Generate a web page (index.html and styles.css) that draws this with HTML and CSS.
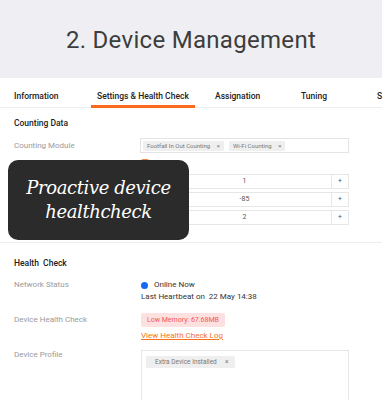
FILE: index.html
```html
<html>
<head>
<meta charset="utf-8" />
<title>Device Management</title>
<link rel="stylesheet" href="styles.css">
</head>
<body>
<header class="banner">
	<h1>2. Device Management</h1>
</header>

<nav class="tabs">
	<span class="tab tab-info">Information</span>
	<span class="tab tab-settings active">Settings &amp; Health Check</span>
	<span class="tab tab-assign">Assignation</span>
	<span class="tab tab-tuning">Tuning</span>
	<span class="tab">S</span>
</nav>

<section class="panel counting">
	<h2 class="section-title">Counting Data</h2>
	<div class="row">
		<span class="label">Counting Module</span>
		<div class="tagbox">
			<span class="tag">Footfall In Out Counting <i>×</i></span>
			<span class="tag">Wi-Fi Counting <i>×</i></span>
		</div>
	</div>
	<!-- these rows sit under the callout, labels hidden -->
	<div class="row row-check">
		<span class="label"></span>
		<span class="check"></span>
	</div>
	<div class="row row-num">
		<span class="label"></span>
		<div class="stepper"><span class="btn"></span><span class="val">1</span><span class="btn">+</span></div>
	</div>
	<div class="row row-num">
		<span class="label"></span>
		<div class="stepper"><span class="btn"></span><span class="val">-85</span><span class="btn">+</span></div>
	</div>
	<div class="row row-num">
		<span class="label"></span>
		<div class="stepper"><span class="btn"></span><span class="val">2</span><span class="btn">+</span></div>
	</div>
</section>

<section class="panel health">
	<h2 class="section-title">Health&nbsp; Check</h2>
	<div class="row row-top">
		<span class="label">Network Status</span>
		<div class="value">
			<div class="status"><span class="dot"></span>Online Now</div>
			<div>Last Heartbeat on&nbsp; 22 May 14:38</div>
		</div>
	</div>
	<div class="row row-top row-hc">
		<span class="label">Device Health Check</span>
		<div class="value">
			<span class="badge">Low Memory: 67.68MB</span>
			<a class="log-link" href="#">View Health Check Log</a>
		</div>
	</div>
	<div class="row row-top row-profile">
		<span class="label">Device Profile</span>
		<div class="areabox">
			<span class="tag">Extra Device Installed&nbsp; <i>×</i></span>
		</div>
	</div>
</section>

<div class="callout">Proactive device<br>healthcheck</div>
</body>
</html>
```

FILE: styles.css
```css
body{
	margin:0;
	width:382px;
	height:400px;
	overflow:hidden;
	background:#fff;
	font-family:Roboto, "Liberation Sans", sans-serif;
	position:relative;
}
.banner{
	height:78px;
	background:#efeff3;
	display:flex;
	align-items:center;
	justify-content:center;
}
.banner h1{
	margin:0;
	font-size:24px;
	font-weight:400;
	letter-spacing:0.3px;
	color:#3d3d3d;
	padding-top:1px;
}
.tabs{
	display:flex;
	height:30px;
	padding-left:8px;
	box-shadow:inset 0 -1px #eeeeee;
	white-space:nowrap;
	overflow:hidden;
}
.tab{
	box-sizing:border-box;
	height:30px;
	padding:10px 6px 0;
	line-height:16px;
	font-size:8.5px;
	font-weight:500;
	color:#222;
	flex-shrink:0;
}
.tab-info{ width:83px; }
.tab-settings{ width:104px; margin-right:14px; }
.tab-assign{ width:86px; }
.tab-tuning{ width:76px; }
.tab.active{
	border-bottom:3px solid #fb6a1b;
}
.panel{
	padding-left:14px;
}
.counting{
	padding-top:9px;
	height:125px;
	border-bottom:1px solid #eeeeee;
}
.health{
	padding-top:14px;
}
.section-title{
	margin:0 0 9px;
	font-size:8.5px;
	font-weight:500;
	line-height:12px;
	color:#222;
}
.health .section-title{
	margin-bottom:10px;
}
.row{
	display:grid;
	grid-template-columns:126px 209px;
	align-items:center;
}
.row-top{
	align-items:start;
}
.label{
	font-size:8px;
	color:#9a9a9a;
	line-height:12px;
}
.tagbox{
	box-sizing:border-box;
	height:15px;
	border:1px solid #e4e4e4;
	padding:2px;
	display:flex;
	gap:5px;
}
.tag{
	display:inline-block;
	height:10px;
	line-height:10px;
	padding:0 4px;
	background:#efefef;
	border-radius:1px;
	font-size:6px;
	color:#777;
	white-space:nowrap;
}
.tag i{
	font-style:normal;
	margin-left:5px;
}
.row-check{
	margin-top:5px;
	height:10px;
}
.check{
	width:8px;
	height:8px;
	background:#f7873e;
	border-radius:2px;
	margin-left:1px;
	margin-top:1px;
	align-self:start;
}
.row-num{
	margin-top:3px;
}
.row-check + .row-num{
	margin-top:6px;
}
.stepper{
	box-sizing:border-box;
	height:15px;
	border:1px solid #e6e6e6;
	display:flex;
	font-size:7px;
	color:#555;
	line-height:13px;
}
.stepper .btn{
	width:16px;
	text-align:center;
}
.stepper .btn:first-child{
	border-right:1px solid #e6e6e6;
}
.stepper .btn:last-child{
	border-left:1px solid #e6e6e6;
}
.stepper .val{
	flex:1;
	text-align:center;
}
.value{
	font-size:8px;
	color:#333;
	line-height:12px;
	padding-left:1px;
}
.status{
	display:flex;
	align-items:center;
}
.dot{
	width:7px;
	height:7px;
	border-radius:50%;
	background:#1769f2;
	margin-right:6px;
}
.row-hc{
	margin-top:10px;
}
.row-hc .label{
	line-height:14px;
}
.badge{
	display:inline-block;
	height:14px;
	line-height:14px;
	padding:0 6px;
	background:#fde1e1;
	color:#f45858;
	font-size:7px;
	border-radius:2px;
}
.log-link{
	display:block;
	margin-top:3px;
	color:#f7721d;
	font-size:8px;
	line-height:12px;
}
.row-profile{
	margin-top:8px;
}
.row-profile .label{
	line-height:10px;
}
.areabox{
	box-sizing:border-box;
	height:70px;
	border:1px solid #e6e6e6;
	padding:5px 4px;
	margin-left:1px;
}
.areabox .tag{
	height:12px;
	line-height:12px;
	padding:0 6px 0 9px;
	font-size:6.5px;
}
.callout{
	position:absolute;
	left:8px;
	top:160px;
	width:181px;
	height:80px;
	box-sizing:border-box;
	padding-top:16px;
	background:#2b2b2b;
	border-radius:10px;
	color:#fff;
	text-align:center;
	font-family:"DejaVu Serif", serif;
	font-style:italic;
	font-size:18px;
	line-height:24px;
	letter-spacing:-0.4px;
}
```
